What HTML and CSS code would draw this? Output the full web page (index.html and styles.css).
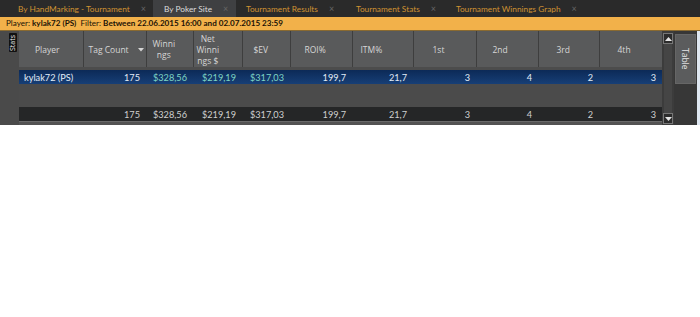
FILE: index.html
```html
<!DOCTYPE html>
<html>
<head>
<meta charset="utf-8">
<link rel="stylesheet" href="styles.css">
</head>
<body>
<div class="app">
  <div class="tabs">
    <div class="tab t1"><span>By HandMarking - Tournament</span><span class="x">×</span></div>
    <div class="tab active t2"><span>By Poker Site</span><span class="x">×</span></div>
    <div class="tab t3"><span>Tournament Results</span><span class="x">×</span></div>
    <div class="tab t4"><span>Tournament Stats</span><span class="x">×</span></div>
    <div class="tab t5"><span>Tournament Winnings Graph</span><span class="x">×</span></div>
  </div>
  <div class="filter">Player: <b>kylak72 (PS)</b>&nbsp; Filter: <b>Between 22.06.2015 16:00 and 02.07.2015 23:59</b></div>
  <div class="main">
    <div class="left"><div class="vtab stats">Stats</div></div>
    <div class="grid">
      <table class="tbl">
        <colgroup>
          <col class="c-player"><col class="c-tag"><col class="c-win"><col class="c-net"><col class="c-ev"><col class="c-roi"><col class="c-itm"><col class="c-1"><col class="c-2"><col class="c-3"><col class="c-4">
        </colgroup>
        <thead>
          <tr class="head">
            <th class="h-player"><span>Player</span></th>
            <th class="h-tag"><span>Tag Count</span><svg class="sort" width="6" height="4" viewBox="0 0 6 4"><path d="M0 0 L6 0 L3 3.5 Z" fill="#d6d6d6"/></svg></th>
            <th class="h-win"><span>Winni<br>ngs</span></th>
            <th class="h-net"><span>Net<br>Winni<br>ngs $</span></th>
            <th class="h-ev"><span>$EV</span></th>
            <th class="h-roi"><span>ROI%</span></th>
            <th class="h-itm"><span>ITM%</span></th>
            <th class="h-1"><span>1st</span></th>
            <th class="h-2"><span>2nd</span></th>
            <th class="h-3"><span>3rd</span></th>
            <th class="h-4"><span>4th</span></th>
          </tr>
        </thead>
        <tbody>
          <tr class="gap"><td colspan="11"></td></tr>
          <tr class="sel">
            <td class="name">kylak72 (PS)</td>
            <td>175</td>
            <td class="money">$328,56</td>
            <td class="money">$219,19</td>
            <td class="money">$317,03</td>
            <td>199,7</td>
            <td>21,7</td>
            <td>3</td>
            <td>4</td>
            <td>2</td>
            <td>3</td>
          </tr>
          <tr class="empty"><td colspan="11"></td></tr>
          <tr class="total">
            <td></td>
            <td>175</td>
            <td>$328,56</td>
            <td>$219,19</td>
            <td>$317,03</td>
            <td>199,7</td>
            <td>21,7</td>
            <td>3</td>
            <td>4</td>
            <td>2</td>
            <td>3</td>
          </tr>
        </tbody>
      </table>
      <div class="bottom"></div>
    </div>
    <div class="scroll">
      <div class="sbtn"><svg width="7" height="4" viewBox="0 0 7 4"><path d="M0 4 L3.5 0 L7 4 Z" fill="#e6e6e6"/></svg></div>
      <div class="strack"></div>
      <div class="sbtn"><svg width="7" height="4" viewBox="0 0 7 4"><path d="M0 0 L3.5 4 L7 0 Z" fill="#e6e6e6"/></svg></div>
    </div>
    <div class="right"><div class="vtab table">Table</div></div>
    <div class="edge"></div>
  </div>
</div>
</body>
</html>
```

FILE: styles.css
```css
* { box-sizing: border-box; }
body {
  margin: 0;
  background: #ffffff;
  font-family: "Open Sans", "Noto Sans", sans-serif;
}
.app {
  width: 700px;
}
.tabs {
  height: 17px;
  background: #2a2a2a;
  display: flex;
  font-family: Lato, "Open Sans", sans-serif;
  font-size: 8.3px;
  color: #cf9232;
}
.tab {
  display: flex;
  align-items: center;
  height: 17px;
  gap: 11px;
  white-space: nowrap;
}
.tab .x {
  color: #666;
  font-size: 9px;
}
.t1 { width: 153px; padding-left: 18px; }
.t2 { width: 83px; padding-left: 11px; }
.t3 { width: 109px; padding-left: 10px; }
.t4 { width: 101px; padding-left: 11px; }
.t5 { padding-left: 10px; }
.tab.active {
  background: #3f4042;
  color: #dcdcdc;
}
.filter {
  height: 14px;
  background: #f2b14a;
  color: #1a1206;
  font-family: Lato, "Open Sans", sans-serif;
  font-size: 8.1px;
  line-height: 13px;
  padding-left: 6px;
  border-bottom: 1px solid #8a6a30;
  white-space: nowrap;
}
.filter b { font-weight: 700; }
.main {
  display: flex;
  height: 94px;
  background: #4c4c4c;
}
.left {
  width: 19px;
  background: #4a4a4a;
  padding: 2px 0 0 9px;
}
.vtab {
  writing-mode: vertical-rl;
  text-align: center;
}
.stats {
  width: 8px;
  height: 19px;
  background: #111;
  color: #eee;
  transform: rotate(180deg);
  font-size: 7px;
  line-height: 8px;
  border-radius: 1px;
}
.grid {
  width: 643px;
  display: flex;
  flex-direction: column;
}
.tbl {
  border-collapse: collapse;
  table-layout: fixed;
  width: 643px;
  font-family: Lato, "Open Sans", sans-serif;
  font-size: 9.2px;
}
.c-player { width: 64px; }
.c-tag { width: 63px; }
.c-win { width: 47px; }
.c-net { width: 49px; }
.c-ev { width: 48px; }
.c-roi { width: 62px; }
.c-itm { width: 61px; }
.c-1 { width: 63px; }
.c-2 { width: 62px; }
.c-3 { width: 61px; }
.c-4 { width: 63px; }
.head th {
  height: 36px;
  background: #595a5b;
  color: #d6d6d6;
  font-family: "Open Sans", "Noto Sans", sans-serif;
  font-weight: 400;
  font-size: 8.5px;
  line-height: 11px;
  padding: 0;
  border-right: 1px solid #3e3e3e;
  text-align: left;
  vertical-align: middle;
  white-space: nowrap;
}
.head th span {
  display: inline-block;
  text-align: center;
  vertical-align: middle;
}
.head th:last-child { border-right: none; }
.h-player { padding-left: 16px !important; }
.h-tag { padding-left: 5px !important; }
.h-win { padding-left: 6px !important; }
.h-net { padding-left: 3px !important; }
.h-ev { padding-left: 11px !important; }
.h-roi { padding-left: 14px !important; }
.h-itm { padding-left: 8px !important; }
.h-1 { padding-left: 19px !important; }
.h-2 { padding-left: 16px !important; }
.h-3 { padding-left: 18px !important; }
.h-4 { padding-left: 18px !important; }
.sort { margin-left: 9px; vertical-align: middle; }
.gap td { height: 3px; padding: 0; background: #4c4c4c; }
.sel td {
  height: 14px;
  padding: 0 6px 0 0;
  text-align: right;
  color: #e3ecf7;
  background: linear-gradient(#0c2a57, #173f76);
}
.sel td.name { text-align: left; padding-left: 5px; }
.sel td.money { color: #7fd6c4; }
.empty td { height: 23px; background: #4b4b4b; padding: 0; }
.total td {
  height: 14px;
  padding: 0 6px 0 0;
  text-align: right;
  color: #d0d0d0;
  background: #252627;
}
.bottom {
  flex: 1;
  background: #535353;
  border-top: 1px solid #6a6a6a;
}
.scroll {
  width: 12px;
  background: #3c3c3c;
  display: flex;
  flex-direction: column;
  padding: 2px 1px 1px;
}
.sbtn {
  height: 11px;
  background: #2c2c2c;
  border: 1px solid #777;
  display: flex;
  align-items: center;
  justify-content: center;
}
.strack {
  flex: 1;
  background: #454545;
  margin: 0 1px;
}
.right {
  width: 23px;
  background: #373737;
  padding: 3px 0 0 1px;
}
.table {
  width: 21px;
  height: 50px;
  background: #5b5c5d;
  color: #e6e6e6;
  font-size: 8.5px;
  line-height: 20px;
  padding-top: 13px;
  text-align: left;
  border: 1px solid #666;
}
.edge {
  width: 3px;
  background: #dfe8f2;
}
```
